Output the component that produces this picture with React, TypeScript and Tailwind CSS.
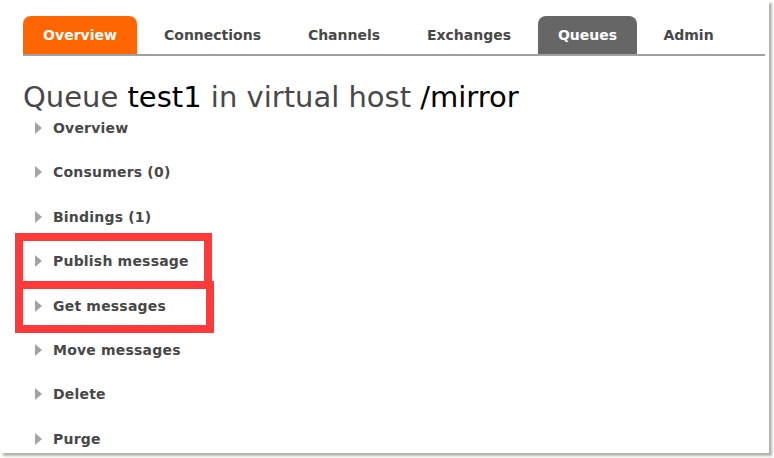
import React from "react";

const tabs = [
  { label: "Overview", w: "w-[114px]", cls: "bg-[#ff6600] text-white rounded-t-[8px]" },
  { label: "Connections", w: "w-[137px]", cls: "text-[#484848]" },
  { label: "Channels", w: "w-[112px]", cls: "text-[#484848]" },
  { label: "Exchanges", w: "w-[124px]", cls: "text-[#484848]" },
  { label: "Queues", w: "w-[99px]", cls: "bg-[#666666] text-white rounded-t-[8px]" },
  { label: "Admin", w: "w-[89px]", cls: "text-[#484848]" },
];

const items = [
  "Overview",
  "Consumers (0)",
  "Bindings (1)",
  "Publish message",
  "Get messages",
  "Move messages",
  "Delete",
  "Purge",
];

export default function App() {
  return (
    <div className="w-[774px] h-[458px] bg-white overflow-hidden">
      <div
        className="relative w-[769px] h-[453px] bg-white shadow-[3px_3px_2px_rgba(120,120,110,0.55)] pl-[23px] pt-[16px]"
        style={{ fontFamily: '"DejaVu Sans", Verdana, sans-serif' }}
      >
        <div className="flex gap-[7px] w-[742px] border-b-2 border-[#a0a0a0] h-[40px]">
          {tabs.map((t) => (
            <div
              key={t.label}
              className={`${t.w} ${t.cls} h-[38px] flex items-center justify-center text-[14px] font-bold`}
            >
              {t.label}
            </div>
          ))}
        </div>
        <h1 className="mt-[26px] h-[30px] leading-[30px] text-[29px] font-normal text-[#484848] whitespace-nowrap">
          Queue <span className="text-black">test1</span> in virtual host{" "}
          <span className="text-black">/mirror</span>
        </h1>
        <div className="mt-[6px] flex flex-col gap-[24.4px]">
          {items.map((it) => (
            <div key={it} className="h-[20px] flex items-center">
              <div className="ml-[12px] w-0 h-0 border-l-[7px] border-l-[#a3a3a3] border-y-[6px] border-y-transparent" />
              <span className="ml-[11px] text-[14px] tracking-[0.2px] font-bold text-[#484848] leading-[20px]">{it}</span>
            </div>
          ))}
        </div>
        <div className="absolute left-[15px] top-[233px] w-[197px] h-[56px] border-[8px] border-[#fc3a3a]" />
        <div className="absolute left-[15px] top-[281px] w-[199px] h-[52px] border-[8px] border-[#fc3a3a]" />
      </div>
    </div>
  );
}
